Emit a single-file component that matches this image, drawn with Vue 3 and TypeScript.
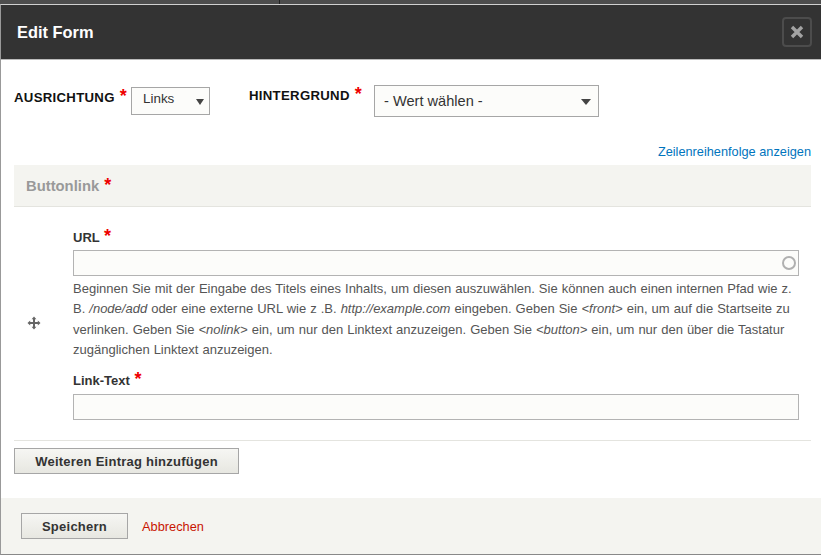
<script setup lang="ts">
const drawerText = 'Zeilenreihenfolge anzeigen'
</script>

<template>
  <div class="page">
    <div class="backdrop"><span class="backdrop-line"></span></div>
    <div class="dialog">
      <div class="dialog-title">
        <span class="title">Edit Form</span>
        <button class="close" aria-label="Schließen">
          <svg width="16" height="16" viewBox="0 0 16 16">
            <path d="M3 3 L13 13 M13 3 L3 13" stroke="#a3a3a3" stroke-width="3.4" fill="none" />
          </svg>
        </button>
      </div>

      <div class="dialog-body">
        <div class="selects">
          <div class="field field-align">
            <label class="select-label">AUSRICHTUNG <span class="req">*</span></label>
            <div class="select select-small">Links<span class="arrow"></span></div>
          </div>
          <div class="field field-bg">
            <label class="select-label">HINTERGRUND <span class="req">*</span></label>
            <div class="select select-large">- Wert wählen -<span class="arrow"></span></div>
          </div>
        </div>

        <div class="toggle-row"><a class="toggle">{{ drawerText }}</a></div>

        <div class="table-head">Buttonlink <span class="req">*</span></div>

        <div class="table-row">
          <div class="handle">
            <svg width="14" height="14" viewBox="0 0 14 14">
              <path d="M7 0.5 L9.4 3.2 H8 V6 H10.8 V4.6 L13.5 7 L10.8 9.4 V8 H8 V10.8 H9.4 L7 13.5 L4.6 10.8 H6 V8 H3.2 V9.4 L0.5 7 L3.2 4.6 V6 H6 V3.2 H4.6 Z" fill="#666" />
            </svg>
          </div>
          <div class="row-fields">
            <label class="label">URL <span class="req">*</span></label>
            <div class="input input-auto"><span class="throbber"></span></div>
            <p class="desc">
              Beginnen Sie mit der Eingabe des Titels eines Inhalts, um diesen auszuwählen. Sie können auch einen internen Pfad wie z. B. <em>/node/add</em> oder eine externe URL wie z .B. <em>http://example.com</em> eingeben. Geben Sie <em>&lt;front&gt;</em> ein, um auf die Startseite zu verlinken. Geben Sie <em>&lt;nolink&gt;</em> ein, um nur den Linktext anzuzeigen. Geben Sie <em>&lt;button&gt;</em> ein, um nur den über die Tastatur zugänglichen Linktext anzuzeigen.
            </p>
            <label class="label label-second">Link-Text <span class="req">*</span></label>
            <div class="input"></div>
          </div>
        </div>

        <button class="btn btn-add">Weiteren Eintrag hinzufügen</button>
      </div>

      <div class="dialog-actions">
        <button class="btn btn-save">Speichern</button>
        <a class="cancel">Abbrechen</a>
      </div>
    </div>
  </div>
</template>

<style>
html, body {
  margin: 0;
  background: #fff;
}
</style>

<style scoped>
.page {
  width: 821px;
  height: 555px;
  display: flex;
  flex-direction: column;
  overflow: hidden;
  font-family: "Liberation Sans", Arial, sans-serif;
}

.backdrop {
  height: 4px;
  flex: none;
  background: #4d4d4d;
  padding-left: 279px;
}

.backdrop-line {
  display: block;
  width: 1px;
  height: 4px;
  background: #222;
}

.dialog {
  flex: 1;
  min-height: 0;
  display: flex;
  flex-direction: column;
  border-top: 1px solid #d0d0d0;
  border-left: 1px solid #999;
  border-bottom: 1px solid #888;
  background: #fff;
}

.dialog-title {
  height: 55px;
  flex: none;
  display: flex;
  align-items: center;
  justify-content: space-between;
  padding: 0 9px 0 16px;
  background: #333;
  border-bottom: 1px solid #bbb;
  box-sizing: border-box;
}

.title {
  color: #fff;
  font-size: 16.4px;
  font-weight: 700;
  padding-top: 1px;
}

.close {
  width: 30px;
  height: 30px;
  padding: 0;
  display: flex;
  align-items: center;
  justify-content: center;
  background: #333;
  border: 2px solid #4c4c4c;
  border-radius: 4px;
}

.dialog-body {
  flex: 1;
  padding: 0 10px 0 13px;
  min-height: 0;
}

.selects {
  display: flex;
  height: 57px;
  padding-top: 25px;
  box-sizing: border-box;
}

.field {
  display: flex;
}

.field-align {
  width: 235px;
  gap: 4px;
  padding-top: 2px;
}

.field-bg {
  gap: 12px;
}

.select-label {
  font-size: 13.2px;
  font-weight: 700;
  color: #111;
  letter-spacing: 0.3px;
  line-height: 16px;
  padding-top: 2px;
}

.req {
  color: #e00;
  font-size: 18px;
  font-weight: 700;
  line-height: 14px;
  margin-left: 1px;
}

.select {
  position: relative;
  box-sizing: border-box;
  background: #fcfcfa;
  border: 1px solid #a6a6a6;
  color: #333;
  font-size: 13.4px;
}

.select-small {
  width: 79px;
  height: 28px;
  padding: 3px 0 0 11px;
}

.select-large {
  width: 225px;
  height: 32px;
  padding: 7px 0 0 9px;
  font-size: 14.6px;
}

.arrow {
  position: absolute;
  right: 7px;
  top: 50%;
  margin-top: -2px;
  border-left: 5px solid transparent;
  border-right: 5px solid transparent;
  border-top: 6px solid #444;
}

.select-small .arrow {
  right: 5px;
  border-left-width: 4px;
  border-right-width: 4px;
}

.toggle-row {
  margin-top: 24px;
  height: 24px;
  line-height: 20px;
  text-align: right;
}

.toggle {
  color: #0074bd;
  font-size: 12.75px;
}

.table-head {
  height: 42px;
  box-sizing: border-box;
  padding: 12px 12px 0;
  background: #f4f4f0;
  border-bottom: 1px solid #e4e4df;
  color: #999;
  font-size: 14.8px;
  font-weight: 700;
  line-height: 18px;
}

.table-row {
  display: flex;
  height: 234px;
  box-sizing: border-box;
  border-bottom: 1px solid #e4e4df;
}

.handle {
  width: 59px;
  flex: none;
  padding: 109px 0 0 13px;
  box-sizing: border-box;
}

.row-fields {
  flex: 1;
  padding: 22px 12px 0 0;
}

.label {
  display: block;
  color: #333;
  font-size: 13px;
  font-weight: 700;
  line-height: 17px;
  margin-bottom: 4px;
}

.label-second {
  margin-bottom: 5px;
}

.input {
  position: relative;
  height: 26px;
  box-sizing: border-box;
  background: #fcfcfa;
  border: 1px solid #b3b3b3;
}

.throbber {
  position: absolute;
  right: 2px;
  top: 5px;
  width: 14px;
  height: 14px;
  box-sizing: border-box;
  border: 2px solid #b0b0b0;
  border-radius: 50%;
}

.desc {
  margin: 3px 0 11px;
  color: #555;
  font-size: 13px;
  line-height: 20.4px;
  word-spacing: 0.4px;
}

.btn {
  display: block;
  box-sizing: border-box;
  height: 26px;
  padding: 0;
  background: linear-gradient(#f6f6f3, #e7e7e1);
  border: 1px solid #a6a6a6;
  color: #333;
  font-family: inherit;
  font-size: 13px;
  font-weight: 700;
  letter-spacing: 0.25px;
}

.btn-add {
  width: 225px;
  margin-top: 7px;
}

.dialog-actions {
  height: 56px;
  flex: none;
  display: flex;
  align-items: center;
  gap: 14px;
  padding-left: 20px;
  background: #f4f4f0;
  box-sizing: border-box;
}

.btn-save {
  width: 107px;
}

.cancel {
  color: #c81400;
  font-size: 12.8px;
}
</style>
